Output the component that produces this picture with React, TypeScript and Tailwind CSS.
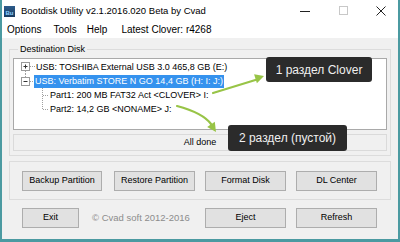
import React from "react";

function TreeRow1() {
  return (
    <div className="flex h-[14px] items-center">
      <svg width="21" height="14" className="shrink-0">
        <rect x="7.5" y="2.5" width="8" height="8" fill="#fff" stroke="#9a9a9a" />
        <line x1="9.5" y1="6.5" x2="13.5" y2="6.5" stroke="#333" />
        <line x1="11.5" y1="4.5" x2="11.5" y2="8.5" stroke="#333" />
        <line x1="16" y1="6.5" x2="21" y2="6.5" stroke="#a0a0a0" strokeDasharray="1 1" />
        <line x1="11.5" y1="11" x2="11.5" y2="14" stroke="#a0a0a0" strokeDasharray="1 1" />
      </svg>
      <span className="pl-[1px] whitespace-nowrap">USB: TOSHIBA External USB 3.0 465,8 GB (E:)</span>
    </div>
  );
}

function TreeRow2() {
  return (
    <div className="flex h-[14px] items-center">
      <svg width="20" height="14" className="shrink-0">
        <line x1="11.5" y1="0" x2="11.5" y2="3" stroke="#a0a0a0" strokeDasharray="1 1" />
        <rect x="7.5" y="3.5" width="8" height="8" fill="#fff" stroke="#9a9a9a" />
        <line x1="9.5" y1="7.5" x2="13.5" y2="7.5" stroke="#333" />
        <line x1="16" y1="7.5" x2="20" y2="7.5" stroke="#a0a0a0" strokeDasharray="1 1" />
      </svg>
      <span className="bg-[#3592ee] text-white px-[1px] h-[13px] leading-[13px] whitespace-nowrap">
        USB: Verbatim STORE N GO 14,4 GB (H: I: J:)
      </span>
    </div>
  );
}

function PartRow({ text, last }: { text: string; last?: boolean }) {
  return (
    <div className="flex h-[14px] items-center">
      <svg width="36" height="14" className="shrink-0">
        <line
          x1="28.5"
          y1="0"
          x2="28.5"
          y2={last ? 7 : 14}
          stroke="#a0a0a0"
          strokeDasharray="1 1"
        />
        <line x1="29" y1="7.5" x2="35" y2="7.5" stroke="#a0a0a0" strokeDasharray="1 1" />
      </svg>
      <span className="whitespace-nowrap">{text}</span>
    </div>
  );
}

function Btn({ label, className }: { label: string; className?: string }) {
  return (
    <div
      className={
        "h-[20px] flex items-center justify-center bg-[#e1e1e1] border border-[#adadad] text-[9px] text-black " +
        (className ?? "")
      }
    >
      {label}
    </div>
  );
}

export default function App() {
  return (
    <div
      className="relative w-[400px] h-[242px] overflow-hidden bg-[#f0f0f0] border-x-2 border-b-[3px] border-[#4b9aa1] flex flex-col text-black"
      style={{ fontFamily: '"Liberation Sans", Arial, sans-serif' }}
    >
      {/* Title bar */}
      <div className="h-[22px] bg-white flex items-center shrink-0">
        <div className="ml-[2px] w-[11px] h-[11px] bg-gradient-to-b from-[#2d5c8c] to-[#173a5e] flex items-end justify-center overflow-hidden">
          <span className="text-[6px] leading-[7px] text-[#8fd0ff] font-bold">Bu</span>
        </div>
        <span className="ml-[6px] text-[9.5px] leading-none">Bootdisk Utility v2.1.2016.020 Beta by Cvad</span>
        <div className="ml-auto flex items-center h-full">
          <svg width="12" height="12" className="mr-[26px]">
            <line x1="1" y1="6.5" x2="11" y2="6.5" stroke="#222" strokeWidth="1" />
          </svg>
          <svg width="12" height="12" className="mr-[26px]">
            <rect x="2.5" y="1.5" width="8" height="8" fill="none" stroke="#c8c8c8" />
          </svg>
          <svg width="12" height="12" className="mr-[11px]">
            <line x1="1.5" y1="1.5" x2="10.5" y2="10.5" stroke="#222" />
            <line x1="10.5" y1="1.5" x2="1.5" y2="10.5" stroke="#222" />
          </svg>
        </div>
      </div>

      {/* Menu bar */}
      <div className="h-[16px] bg-white flex items-center text-[10px] leading-none shrink-0">
        <span className="ml-[5px]">Options</span>
        <span className="ml-[12px]">Tools</span>
        <span className="ml-[10px]">Help</span>
        <span className="ml-[14px]">Latest Clover: r4268</span>
      </div>

      {/* Content */}
      <div className="flex-1 flex flex-col px-[7px]">
        <fieldset className="mt-[5px] border border-[#dcdcdc] px-[3px] pt-[3px] pb-[4px]">
          <legend className="ml-[5px] px-[2px] text-[9px] leading-[12px]">Destination Disk</legend>
          <div className="h-[72px] bg-white border border-[#a9a9a9] text-[9px] leading-none flex flex-col">
            <div className="h-[1px]" />
            <TreeRow1 />
            <TreeRow2 />
            <PartRow text="Part1: 200 MB FAT32 Act <CLOVER> I:" />
            <PartRow text="Part2: 14,2 GB <NONAME> J:" last />
          </div>
          <div className="mt-[4px] h-[17px] border border-[#dadada] flex items-center justify-center text-[9px]">
            All done
          </div>
        </fieldset>

        <div className="mt-[5px] border border-[#dcdcdc] pt-[9px] pb-[8px] pl-[12px] flex">
          <Btn label="Backup Partition" className="w-[80px]" />
          <Btn label="Restore Partition" className="w-[81px] ml-[12px]" />
          <Btn label="Format Disk" className="w-[81px] ml-[10px]" />
          <Btn label="DL Center" className="w-[81px] ml-[10px]" />
        </div>

        <div className="mt-[8px] flex items-center">
          <Btn label="Exit" className="w-[57px] ml-[13px]" />
          <span className="ml-[13px] w-[113px] text-[9.5px] text-[#8c8c8c] whitespace-nowrap">© Cvad soft 2012-2016</span>
          <Btn label="Eject" className="w-[81px]" />
          <Btn label="Refresh" className="w-[81px] ml-[10px]" />
        </div>
      </div>

      {/* Annotation arrows */}
      <svg className="absolute left-[-2px] top-0 pointer-events-none" width="400" height="242">
        <line x1="213" y1="93" x2="257" y2="79.5" stroke="#98c447" strokeWidth="2.2" strokeLinecap="round" />
        <polygon points="264,76 256.9,83.3 254.1,74.3" fill="#98c447" />
        <path d="M177,106 Q203,113 211,124" fill="none" stroke="#98c447" strokeWidth="2.2" strokeLinecap="round" />
        <polygon points="216,132 214.8,121.8 207.2,127" fill="#98c447" />
      </svg>

      {/* Tooltips */}
      <div className="absolute left-[264px] top-[57px] w-[106px] h-[25px] rounded-[3px] bg-[#2b2b2b] flex items-center justify-center text-[12px] text-[#f0f0f0]">
        1 раздел Clover
      </div>
      <div className="absolute left-[226px] top-[125px] w-[119px] h-[26px] rounded-[3px] bg-[#2b2b2b] flex items-center justify-center text-[12px] text-[#f0f0f0]">
        2 раздел (пустой)
      </div>
    </div>
  );
}
